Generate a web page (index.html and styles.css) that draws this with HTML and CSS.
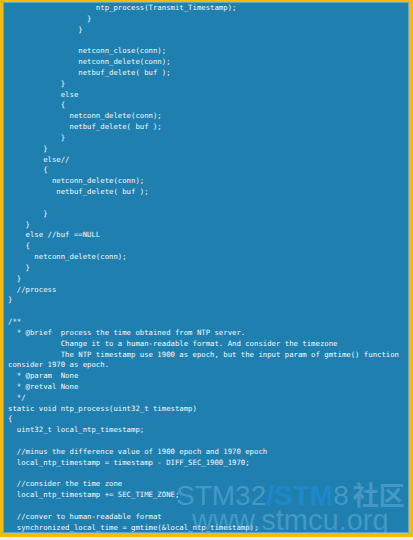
FILE: index.html
```html
<!DOCTYPE html>
<html>
<head>
<meta charset="utf-8">
<link rel="stylesheet" href="styles.css">
</head>
<body>
<div class="frame">
<pre class="code">                    ntp_process(Transmit_Timestamp);
                  }
                }

                netconn_close(conn);
                netconn_delete(conn);
                netbuf_delete( buf );
            }
            else
            {
              netconn_delete(conn);
              netbuf_delete( buf );
            }
        }
        else//
        {
          netconn_delete(conn);
           netbuf_delete( buf );

        }
    }
    else //buf ==NULL
    {
      netconn_delete(conn);
    }
  }
  //process
}

/**
  * @brief  process the time obtained from NTP server.
            Change it to a human-readable format. And consider the timezone
            The NTP timestamp use 1900 as epoch, but the input param of gmtime() function
consider 1970 as epoch.
  * @param  None
  * @retval None
  */
static void ntp_process(uint32_t timestamp)
{
  uint32_t local_ntp_timestamp;

  //minus the difference value of 1900 epoch and 1970 epoch
  local_ntp_timestamp = timestamp - DIFF_SEC_1900_1970;

  //consider the time zone
  local_ntp_timestamp += SEC_TIME_ZONE;

  //conver to human-readable format
  synchronized_local_time = gmtime(&amp;local_ntp_timestamp);</pre>
<div class="mark">
  <div class="mark-top"><span class="lt">STM32</span><span class="dk">/STM</span><span class="lt">8</span><span class="cn">社区</span></div>
  <div class="mark-url">www.stmcu.org</div>
</div>
</div>
</body>
</html>
```
FILE: styles.css
```css
html, body {
  margin: 0;
  padding: 0;
  background: #eef2f6;
}
.frame {
  position: relative;
  box-sizing: border-box;
  width: 413px;
  height: 537px;
  background: #1f80b0;
  border-style: solid;
  border-color: #f8b808;
  border-width: 2px 4px 4px 3px;
  box-shadow: inset 0 0 0 1px rgba(160, 210, 230, 0.5);
  overflow: hidden;
}
.code {
  margin: 0;
  padding: 1px 0 0 5px;
  font-family: "DejaVu Sans Mono", "Liberation Mono", monospace;
  font-size: 7.3px;
  line-height: 10.83px;
  color: #f6f9fc;
  white-space: pre;
}
.mark {
  position: absolute;
  left: 173px;
  top: 478px;
  font-family: "Liberation Sans", Arial, sans-serif;
  color: rgba(130, 195, 230, 0.38);
  pointer-events: none;
}
.mark-top {
  font-size: 28px;
  line-height: 28px;
  white-space: nowrap;
}
.mark-top .dk {
  font-weight: bold;
  color: rgba(30, 140, 215, 0.7);
}
.mark-top .cn {
  font-family: "Noto Sans CJK SC", sans-serif;
  font-weight: bold;
  font-size: 26px;
  margin-left: 4px;
}
.mark-url {
  font-size: 29px;
  line-height: 21px;
  margin-left: 16px;
  white-space: nowrap;
}
```
